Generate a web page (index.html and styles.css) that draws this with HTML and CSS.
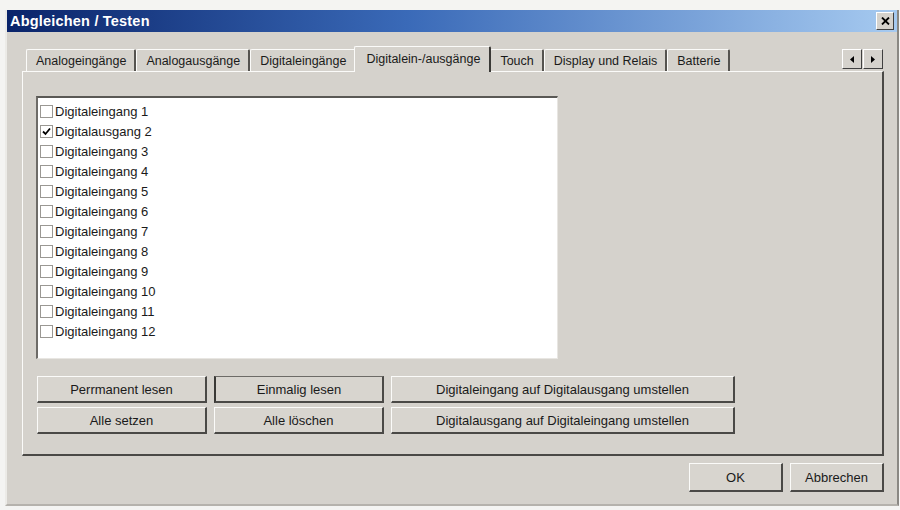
FILE: index.html
```html
<!DOCTYPE html>
<html lang="de">
<head>
  <meta charset="UTF-8" />
  <title>Abgleichen / Testen</title>
  <link rel="stylesheet" href="styles.css">
</head>
<body>
  <div class="window">
    <div class="titlebar">
      <span class="title">Abgleichen / Testen</span>
      <span class="close">
        <svg width="9" height="8" viewBox="0 0 9 8"><path d="M1 0.5 L8 7.5 M8 0.5 L1 7.5" stroke="#000" stroke-width="1.8"/></svg>
      </span>
    </div>

    <div class="content">
      <div class="tabstrip">
        <div class="tabs">
          <span class="tab">Analogeingänge</span>
          <span class="tab">Analogausgänge</span>
          <span class="tab">Digitaleingänge</span>
          <span class="tab active">Digitalein-/ausgänge</span>
          <span class="tab">Touch</span>
          <span class="tab">Display und Relais</span>
          <span class="tab">Batterie</span>
        </div>
        <div class="scroller">
          <span class="arrow"><svg width="4" height="7" viewBox="0 0 4 7"><path d="M4 0 L0 3.5 L4 7 Z" fill="#000"/></svg></span>
          <span class="arrow"><svg width="4" height="7" viewBox="0 0 4 7"><path d="M0 0 L4 3.5 L0 7 Z" fill="#000"/></svg></span>
        </div>
      </div>

      <div class="panel">
        <div class="listbox">
          <div class="item"><span class="check"></span>Digitaleingang 1</div>
          <div class="item"><span class="check"><svg width="9" height="9" viewBox="0 0 9 9"><path d="M1 4.5 L3.5 7 L8 1.5" fill="none" stroke="#000" stroke-width="1.8"/></svg></span>Digitalausgang 2</div>
          <div class="item"><span class="check"></span>Digitaleingang 3</div>
          <div class="item"><span class="check"></span>Digitaleingang 4</div>
          <div class="item"><span class="check"></span>Digitaleingang 5</div>
          <div class="item"><span class="check"></span>Digitaleingang 6</div>
          <div class="item"><span class="check"></span>Digitaleingang 7</div>
          <div class="item"><span class="check"></span>Digitaleingang 8</div>
          <div class="item"><span class="check"></span>Digitaleingang 9</div>
          <div class="item"><span class="check"></span>Digitaleingang 10</div>
          <div class="item"><span class="check"></span>Digitaleingang 11</div>
          <div class="item"><span class="check"></span>Digitaleingang 12</div>
        </div>

        <div class="actions">
          <button class="btn">Perrmanent lesen</button>
          <button class="btn default">Einmalig lesen</button>
          <button class="btn">Digitaleingang auf Digitalausgang umstellen</button>
          <button class="btn">Alle setzen</button>
          <button class="btn">Alle löschen</button>
          <button class="btn">Digitalausgang auf Digitaleingang umstellen</button>
        </div>
      </div>

      <div class="footer">
        <button class="btn">OK</button>
        <button class="btn">Abbrechen</button>
      </div>
    </div>
  </div>
</body>
</html>
```

FILE: styles.css
```css
body {
  margin: 0;
  padding: 0;
  background: #f4f4f2;
  font-family: "Liberation Sans", Arial, sans-serif;
  font-size: 13px;
  color: #1a1a1a;
}

.window {
  margin: 10px 1px 0 5px;
  height: 496px;
  background: #d5d2cc;
  border-left: 2px solid #ecebe7;
  border-right: 2px solid #8a8883;
  border-bottom: 2px solid #b5b2ac;
  box-sizing: border-box;
}

.titlebar {
  height: 22px;
  margin-top: 1px;
  display: flex;
  align-items: center;
  justify-content: space-between;
  padding: 0 3px 0 3px;
  background: linear-gradient(to right, #0a246a 0%, #3a6ab8 45%, #a6caf0 100%);
}

.title {
  color: #fff;
  font-weight: bold;
  font-size: 14.5px;
  letter-spacing: 0.2px;
}

.close {
  width: 16px;
  height: 16px;
  display: flex;
  align-items: center;
  justify-content: center;
  background: #d5d2cc;
  border-top: 1px solid #fff;
  border-left: 1px solid #fff;
  border-right: 1px solid #404040;
  border-bottom: 1px solid #404040;
}

.content {
  padding: 14px 13px 0 15px;
}

.tabstrip {
  display: flex;
  justify-content: space-between;
  height: 25px;
}

.tabs {
  display: flex;
  align-items: flex-end;
  padding-left: 4px;
}

.tab {
  height: 22px;
  line-height: 22px;
  font-size: 12.5px;
  padding: 0 8px 0 9px;
  border-top: 1px solid #fbfbf9;
  border-left: 1px solid #fbfbf9;
  border-right: 2px solid #55534f;
  box-sizing: border-box;
  border-radius: 2px 2px 0 0;
}

.tab.active {
  height: 26px;
  line-height: 24px;
  margin: 0 -1px 0 -2px;
  padding: 0 9px 0 11px;
  border-right: 2px solid #3a3936;
  position: relative;
  top: 1px;
  background: #d5d2cc;
}

.scroller {
  display: flex;
  margin: 3px 1px 0 0;
}

.arrow {
  width: 18px;
  height: 18px;
  display: flex;
  align-items: center;
  justify-content: center;
  margin-left: 1px;
  border-top: 1px solid #fff;
  border-left: 1px solid #fff;
  border-right: 1px solid #404040;
  border-bottom: 1px solid #404040;
}

.panel {
  height: 385px;
  box-sizing: border-box;
  padding: 24px 0 0 13px;
  border-top: 1px solid #fbfbf9;
  border-left: 1px solid #fbfbf9;
  border-right: 2px solid #4a4946;
  border-bottom: 2px solid #4a4946;
}

.listbox {
  width: 522px;
  height: 263px;
  box-sizing: border-box;
  background: #fff;
  padding: 3px 0 0 2px;
  border-top: 2px solid #5a5955;
  border-left: 2px solid #6d6b67;
  border-right: 1px solid #e8e6e2;
  border-bottom: 1px solid #e8e6e2;
}

.item {
  display: flex;
  align-items: center;
  height: 20px;
  gap: 2px;
}

.check {
  width: 13px;
  height: 13px;
  box-sizing: border-box;
  border: 1px solid #9a9893;
  display: flex;
  align-items: center;
  justify-content: center;
}

.actions {
  display: grid;
  grid-template-columns: 170px 170px 344px;
  grid-auto-rows: 27px;
  column-gap: 7px;
  row-gap: 4px;
  margin-top: 17px;
  margin-left: 1px;
}

.btn {
  font-family: "Liberation Sans", Arial, sans-serif;
  font-size: 13px;
  color: #1a1a1a;
  background: #d8d5cf;
  padding: 0;
  border-top: 1px solid #fbfbf9;
  border-left: 1px solid #fbfbf9;
  border-right: 2px solid #4a4946;
  border-bottom: 2px solid #4a4946;
}

.btn.default {
  border-left: 2px solid #3a3936;
  border-top: 1px solid #6d6b67;
}

.footer {
  display: flex;
  justify-content: flex-end;
  gap: 7px;
  margin-top: 7px;
}

.footer .btn {
  width: 94px;
  height: 29px;
}
```
